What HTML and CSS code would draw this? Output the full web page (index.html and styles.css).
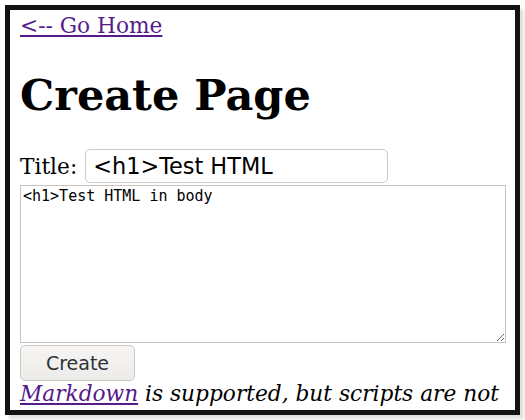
FILE: index.html
```html
<!DOCTYPE html>
<html>
<head>
<meta charset="utf-8">
<title>Create Page</title>
<link rel="stylesheet" href="styles.css">
</head>
<body>
<div class="frame">
  <a class="link" href="#">&lt;-- Go Home</a>
  <h1 class="heading">Create Page</h1>
  <form class="form">
    <div class="title-row">
      <label class="label" for="title">Title:</label>
      <input class="title-input" id="title" type="text" value="<h1>Test HTML">
    </div>
    <textarea class="body-input">&lt;h1&gt;Test HTML in body</textarea>
    <button class="create-btn" type="button">Create</button>
  </form>
  <p class="note"><a class="link" href="#">Markdown</a> is supported, but scripts are not</p>
</div>
</body>
</html>
```
FILE: styles.css
```css
html, body {
  margin: 0;
  padding: 0;
  background: #fff;
}
body {
  padding: 5px;
  font-family: "DejaVu Serif", serif;
  font-size: 21.7px;
  color: #000;
}
.frame {
  box-sizing: border-box;
  width: 515px;
  height: 410px;
  border: 5px solid #121212;
  padding: 3px 10px;
  box-shadow: 4px 4px 3px rgba(0, 0, 0, 0.12);
  overflow: hidden;
}
.link {
  color: #551a8b;
}
.heading {
  font-size: 43px;
  font-weight: bold;
  margin: 32px 0 29px;
}
.form {
  margin: 0;
}
.title-row {
  display: flex;
  align-items: center;
  gap: 8px;
}
.title-input {
  box-sizing: border-box;
  width: 303px;
  height: 34px;
  border: 1px solid #cfcac5;
  border-radius: 5px;
  padding: 2px 7px;
  font-family: "DejaVu Sans", sans-serif;
  font-size: 22.4px;
  color: #000;
  background: #fff;
}
.body-input {
  display: block;
  box-sizing: border-box;
  width: 486px;
  height: 158px;
  margin: 2px 0 2px;
  border: 1px solid #c8c3be;
  padding: 1px 2px;
  font-family: "DejaVu Sans Mono", monospace;
  font-size: 15px;
  resize: both;
}
.create-btn {
  box-sizing: border-box;
  width: 115px;
  height: 36px;
  border: 1px solid #cdc7c2;
  border-radius: 5px;
  background: linear-gradient(#f6f5f4, #edebe9);
  font-family: "DejaVu Sans", sans-serif;
  font-size: 19px;
  color: #2e3436;
  padding: 0;
}
.note {
  margin: 0;
  font-style: italic;
}
```
